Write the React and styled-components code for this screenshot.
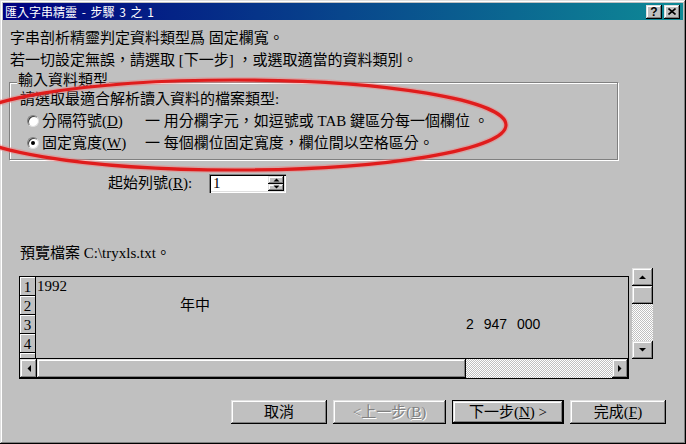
import React from "react";
import styled, { createGlobalStyle, css } from "styled-components";

const FONT = `"Liberation Serif", "Noto Sans CJK TC", serif`;

const Global = createGlobalStyle`
  html, body { margin: 0; padding: 0; background: #c0c0c0; }
  body { width: 686px; height: 444px; overflow: hidden; }
`;

const raised = css`
  background: #c0c0c0;
  box-shadow: inset -1px -1px #000, inset 1px 1px #dfdfdf,
    inset -2px -2px #808080, inset 2px 2px #fff;
`;

const dither = css`
  background-color: #c0c0c0;
  background-image: conic-gradient(#fff 0 25%, #c0c0c0 0 50%, #fff 0 75%, #c0c0c0 0);
  background-size: 2px 2px;
`;

const Window = styled.div`
  position: relative;
  box-sizing: border-box;
  width: 686px;
  height: 444px;
  padding: 3px;
  background: #c0c0c0;
  box-shadow: inset -1px -1px #000, inset 1px 1px #dfdfdf,
    inset -2px -2px #808080, inset 2px 2px #fff;
  font-family: ${FONT};
  font-size: 15px;
  color: #000;
  display: flex;
  flex-direction: column;
`;

const TitleBar = styled.div`
  height: 17px;
  display: flex;
  align-items: center;
  padding: 0 3px 0 2px;
  background: linear-gradient(to right, #000080, #08468c 50%, #0e8a96);
  color: #fff;
  font-family: "Noto Sans CJK TC", sans-serif;
  font-size: 12px;
  line-height: 17px;
`;

const TitleText = styled.span`
  flex: 1;
  white-space: nowrap;
  word-spacing: 2px;
`;

const TitleButtons = styled.div`
  display: flex;
  gap: 2px;
`;

const TitleButton = styled.div`
  ${raised}
  width: 16px;
  height: 14px;
  display: flex;
  align-items: center;
  justify-content: center;
  color: #000;
  font-family: "Liberation Sans", sans-serif;
  font-weight: bold;
  font-size: 12px;
  line-height: 14px;
`;

const Content = styled.div`
  flex: 1;
  display: flex;
  flex-direction: column;
  padding: 7px 6px 0 6px;
`;

const Line = styled.div`
  padding-left: ${(p) => p.$indent ?? 1}px;
  height: 22px;
  line-height: 22px;
  white-space: nowrap;
`;

const GroupBox = styled.div`
  position: relative;
  box-sizing: border-box;
  width: 609px;
  margin-top: 11px;
  padding: 5px 10px;
  border: 1px solid #808080;
  box-shadow: inset 1px 1px #fff, 1px 1px #fff;
`;

const Legend = styled.div`
  position: absolute;
  top: -13px;
  left: 7px;
  padding: 0 1px;
  line-height: 20px;
  background: #c0c0c0;
`;

const RadioRow = styled.div`
  display: grid;
  grid-template-columns: 118px auto;
  align-items: center;
  padding-left: 7px;
  height: 22px;
  line-height: 22px;
  white-space: nowrap;
`;

const RadioLabel = styled.div`
  display: flex;
  align-items: center;
  gap: 3px;
`;

const RadioCircle = styled.span`
  position: relative;
  box-sizing: border-box;
  width: 12px;
  height: 12px;
  border-radius: 50%;
  background: #fff;
  border: 1px solid;
  border-color: #808080 #dfdfdf #dfdfdf #808080;
  box-shadow: inset 1px 1px #404040;
  ${(p) =>
    p.$checked &&
    css`
      &::after {
        content: "";
        position: absolute;
        left: 3px;
        top: 3px;
        width: 4px;
        height: 4px;
        border-radius: 50%;
        background: #000;
      }
    `}
`;

const StartRow = styled.div`
  display: flex;
  align-items: center;
  margin-top: 14px;
  padding-left: 99px;
  height: 19px;
`;

const StartLabel = styled.div`
  width: 101px;
  white-space: nowrap;
  line-height: 19px;
`;

const SpinBox = styled.div`
  box-sizing: border-box;
  width: 77px;
  height: 19px;
  display: flex;
  align-items: stretch;
  background: #fff;
  box-shadow: inset 1px 1px #808080, inset 2px 2px #000,
    inset -1px -1px #fff, inset -2px -2px #dfdfdf;
  padding: 2px;
`;

const SpinValue = styled.div`
  flex: 1;
  padding-left: 2px;
  line-height: 15px;
`;

const SpinButtons = styled.div`
  width: 16px;
  display: flex;
  flex-direction: column;
`;

const SpinButton = styled.div`
  ${raised}
  flex: 1;
  display: flex;
  align-items: center;
  justify-content: center;
`;

const PreviewLabel = styled(Line)`
  margin-top: 49px;
`;

const PreviewArea = styled.div`
  display: flex;
  align-items: flex-start;
  margin-top: 4px;
  padding-left: 10px;
`;

const PreviewColumn = styled.div`
  display: flex;
  flex-direction: column;
  margin-top: 8px;
  width: 610px;
`;

const PreviewBox = styled.div`
  box-sizing: border-box;
  height: 83px;
  border: 1px solid #000;
  overflow: hidden;
  display: flex;
  flex-direction: column;
`;

const PreviewRow = styled.div`
  display: flex;
  flex: none;
  height: 19px;
`;

const RowNum = styled.div`
  box-sizing: border-box;
  width: 16px;
  height: 19px;
  flex: none;
  border-right: 1px solid #000;
  border-bottom: 1px solid #000;
  box-shadow: inset 1px 1px #fff;
  display: flex;
  align-items: flex-end;
  justify-content: center;
  font-size: 15px;
  line-height: 16px;
`;

const RowText = styled.div`
  padding-left: ${(p) => p.$indent}px;
  line-height: 19px;
  white-space: pre;
  font-family: ${(p) => (p.$sans ? `"Liberation Sans", "Noto Sans CJK TC", sans-serif` : FONT)};
  font-size: ${(p) => (p.$sans ? 14 : 15)}px;
  word-spacing: ${(p) => (p.$sans ? 6 : 0)}px;
`;

const HScroll = styled.div`
  box-sizing: border-box;
  height: 20px;
  display: flex;
  border: 1px solid #000;
  border-top: none;
`;

const ScrollButton = styled.div`
  ${raised}
  flex: none;
  width: ${(p) => p.$w || 17}px;
  height: ${(p) => p.$h || 19}px;
  display: flex;
  align-items: center;
  justify-content: center;
`;

const HThumb = styled.div`
  ${raised}
  width: ${(p) => p.$w}px;
  flex: none;
`;

const Track = styled.div`
  ${dither}
  flex: 1;
`;

const VScroll = styled.div`
  margin-left: 3px;
  width: 21px;
  height: 91px;
  display: flex;
  flex-direction: column;
`;

const ButtonRow = styled.div`
  display: flex;
  justify-content: flex-end;
  gap: 6px;
  margin-top: 21px;
  padding-right: 11px;
`;

const Button = styled.div`
  ${raised}
  box-sizing: border-box;
  width: ${(p) => p.$w}px;
  height: 24px;
  display: flex;
  align-items: center;
  justify-content: center;
  white-space: nowrap;
  line-height: 20px;
  ${(p) =>
    p.$default &&
    css`
      border: 1px solid #000;
    `}
  ${(p) =>
    p.$disabled &&
    css`
      color: #808080;
      text-shadow: 1px 1px #fff;
    `}
`;

const Annotation = styled.svg`
  position: absolute;
  left: 0;
  top: 0;
  pointer-events: none;
`;

const Arrow = ({ dir }) => {
  const pts = {
    up: "0,4 7,4 3.5,0.5",
    down: "0,0 7,0 3.5,3.5",
    left: "4,0 4,7 0.5,3.5",
    right: "0,0 0,7 3.5,3.5",
  }[dir];
  const horiz = dir === "left" || dir === "right";
  return (
    <svg width={horiz ? 4 : 7} height={horiz ? 7 : 4} viewBox={horiz ? "0 0 4 7" : "0 0 7 4"}>
      <polygon points={pts} fill="#000" />
    </svg>
  );
};

const SmallArrow = ({ dir }) => (
  <svg width="7" height="4" viewBox="0 0 7 4">
    <polygon points={dir === "up" ? "0.5,3.5 6.5,3.5 3.5,0.5" : "0.5,0.5 6.5,0.5 3.5,3.5"} fill="#000" />
  </svg>
);

const rows = [
  { n: 1, text: "1992", indent: 1 },
  { n: 2, text: "年中", indent: 144 },
  { n: 3, text: "2 947 000", indent: 430, sans: true },
  { n: 4, text: "", indent: 0 },
  { n: "", text: "", indent: 0 },
];

export default function App() {
  return (
    <>
      <Global />
      <Window>
        <TitleBar>
          <TitleText>匯入字串精靈 - 步驟 3 之 1</TitleText>
          <TitleButtons>
            <TitleButton>?</TitleButton>
            <TitleButton>
              <svg width="8" height="7" viewBox="0 0 8 7">
                <path d="M0.5 0.5 L7.5 6.5 M7.5 0.5 L0.5 6.5" stroke="#000" strokeWidth="1.6" />
              </svg>
            </TitleButton>
          </TitleButtons>
        </TitleBar>
        <Content>
          <Line>字串剖析精靈判定資料類型爲 固定欄寬。</Line>
          <Line>若一切設定無誤，請選取 [下一步] ，或選取適當的資料類別。</Line>
          <GroupBox>
            <Legend>輸入資料類型</Legend>
            <Line $indent={0}>請選取最適合解析讀入資料的檔案類型:</Line>
            <RadioRow>
              <RadioLabel>
                <RadioCircle />
                <span>
                  分隔符號(<u>D</u>)
                </span>
              </RadioLabel>
              <span>一 用分欄字元，如逗號或 TAB 鍵區分每一個欄位 。</span>
            </RadioRow>
            <RadioRow>
              <RadioLabel>
                <RadioCircle $checked />
                <span>
                  固定寬度(<u>W</u>)
                </span>
              </RadioLabel>
              <span>一 每個欄位固定寬度，欄位間以空格區分。</span>
            </RadioRow>
          </GroupBox>
          <StartRow>
            <StartLabel>
              起始列號(<u>R</u>):
            </StartLabel>
            <SpinBox>
              <SpinValue>1</SpinValue>
              <SpinButtons>
                <SpinButton>
                  <SmallArrow dir="up" />
                </SpinButton>
                <SpinButton>
                  <SmallArrow dir="down" />
                </SpinButton>
              </SpinButtons>
            </SpinBox>
          </StartRow>
          <PreviewLabel $indent={11}>預覽檔案 C:\tryxls.txt。</PreviewLabel>
          <PreviewArea>
            <PreviewColumn>
              <PreviewBox>
                {rows.map((r, i) => (
                  <PreviewRow key={i}>
                    <RowNum>{r.n}</RowNum>
                    <RowText $indent={r.indent} $sans={r.sans}>
                      {r.text}
                    </RowText>
                  </PreviewRow>
                ))}
              </PreviewBox>
              <HScroll>
                <ScrollButton $w={17}>
                  <Arrow dir="left" />
                </ScrollButton>
                <HThumb $w={429} />
                <Track />
                <ScrollButton $w={16}>
                  <Arrow dir="right" />
                </ScrollButton>
              </HScroll>
            </PreviewColumn>
            <VScroll>
              <ScrollButton $w={21} $h={18}>
                <Arrow dir="up" />
              </ScrollButton>
              <ScrollButton $w={21} $h={18} />
              <Track />
              <ScrollButton $w={21} $h={18}>
                <Arrow dir="down" />
              </ScrollButton>
            </VScroll>
          </PreviewArea>
          <ButtonRow>
            <Button $w={96}>取消</Button>
            <Button $w={113} $disabled>
              &lt;上一步(<u>B</u>)
            </Button>
            <Button $w={112} $default>
              下一步(<u>N</u>) &gt;
            </Button>
            <Button $w={96}>
              完成(<u>F</u>)
            </Button>
          </ButtonRow>
        </Content>
        <Annotation width="686" height="444" viewBox="0 0 686 444">
          <ellipse cx="235" cy="125" rx="271" ry="45" fill="none" stroke="#f08080" strokeWidth="6" opacity="0.45" />
          <ellipse cx="235" cy="125" rx="271" ry="45" fill="none" stroke="#e01c1c" strokeWidth="3.2" />
        </Annotation>
      </Window>
    </>
  );
}
